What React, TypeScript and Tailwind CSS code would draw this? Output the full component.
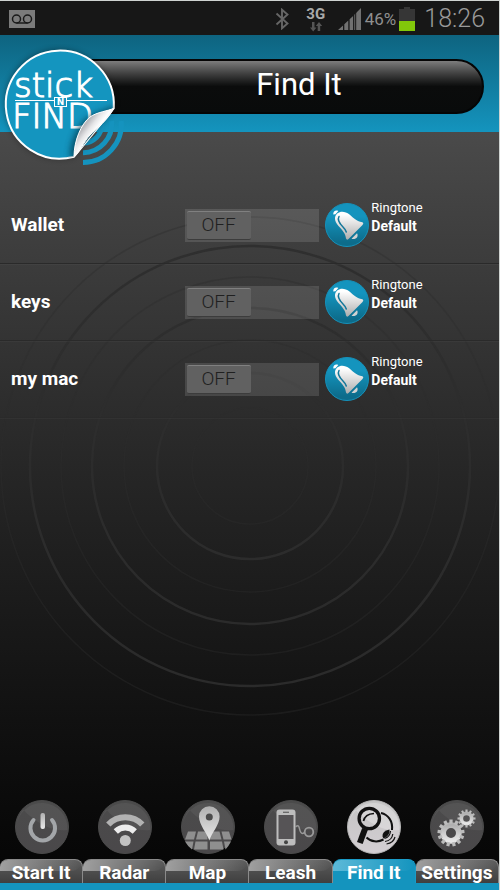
import { useState, type ReactNode } from "react";

function StatusBar() {
  return (
    <div className="flex h-[34px] items-center bg-[#171717] pl-[9px] pr-[14px] pt-[2px] text-[#8f8f8f]">
      <svg width="26" height="18" viewBox="0 0 26 18" role="img" aria-label="Voicemail">
        <rect width="26" height="18" fill="#7b7b7b" />
        <g fill="none" stroke="#1a1a1a" strokeWidth="1.5">
          <circle cx="7.5" cy="9" r="4" />
          <circle cx="18.5" cy="9" r="4" />
          <path d="M7.5 13h11" />
        </g>
      </svg>
      <div className="ml-auto flex items-center">
        <svg width="14" height="22" viewBox="0 0 14 22" fill="none" stroke="#666" strokeWidth="1.9" role="img" aria-label="Bluetooth">
          <path d="M1.500 5.500l11 10-5.500 4.800V1.700l5.500 4.800-11 10" />
        </svg>
        <div className="ml-[17px] flex w-[20px] flex-col items-center text-[15px] font-bold leading-[15px] text-[#a9a9a9]">
          <span>3G</span>
          <svg width="14" height="10" viewBox="0 0 14 10" fill="#555" aria-hidden="true">
            <path d="M3 0h2.500v5.500h2L4.200 9.500 1 5.500h2zM8.700 9h2.500V4h2L10 0 6.800 4h1.900z" />
          </svg>
        </div>
        <svg className="ml-[12px]" width="24" height="24" viewBox="0 0 24 24" fill="#717171" role="img" aria-label="Signal">
          <path d="M0 23l5-4.500V23zM6.300 17.200l4-3.800V23h-4zM11.600 12.200l3.500-3.300V23h-3.500zM16.300 7.700L23 1v22h-6.700z" />
          <path d="M17.700 5v18" stroke="#171717" strokeWidth="1" />
        </svg>
        <span className="ml-[3px] text-[17px] leading-[20px]">46%</span>
        <svg className="ml-[3px]" width="16" height="24" viewBox="0 0 16 24" role="img" aria-label="Battery">
          <path d="M5 0h6v2h5v12H0V2h5z" fill="#363636" />
          <rect y="14" width="16" height="10" fill="#82c80a" />
        </svg>
        <span className="ml-[9px] text-[25px] font-light leading-[30px] text-[#9a9a9a]">18:26</span>
      </div>
    </div>
  );
}

function Logo() {
  return (
    <svg className="absolute left-0 top-[9px]" width="128" height="124" viewBox="0 44 128 124" role="img" aria-label="Stick N Find">
      <defs>
        <linearGradient id="curl" x1="86" y1="124" x2="99" y2="134" gradientUnits="userSpaceOnUse">
          <stop offset="0" stopColor="#b9b9bd" />
          <stop offset="0.35" stopColor="#e6e6e8" />
          <stop offset="0.7" stopColor="#fff" />
          <stop offset="1" stopColor="#dcdcde" />
        </linearGradient>
        <clipPath id="disc">
          <path d="M113.700 108.300A53.500 53.500 0 1 0 74 156.700Z" />
        </clipPath>
        <filter id="soft" x="-30%" y="-30%" width="160%" height="160%">
          <feGaussianBlur stdDeviation="3" />
        </filter>
      </defs>
      <g fill="none" stroke="#1593be" strokeWidth="5">
        <path d="M83 162.500A38.500 38.500 0 0 0 121.300 121" />
        <path d="M83 152.700A28.700 28.700 0 0 0 111.500 121" />
        <path d="M83 143A19 19 0 0 0 102 124" />
      </g>
      <path d="M113.700 108.300A54.500 54.500 0 1 0 74 156.700Z" fill="#000" opacity="0.4" filter="url(#soft)" />
      <path d="M113.700 108.300A54 54 0 1 0 74 156.700Z" fill="#1495bf" stroke="#fff" strokeWidth="2" />
      <g fill="#fff" stroke="#fff" strokeWidth="1.100" className="font-['DejaVu_Sans']">
        <text x="14" y="97" fontSize="34" fontWeight="200">stick</text>
        <text x="12" y="128" fontSize="34" fontWeight="200">FIND</text>
      </g>
      <path d="M15 100.500h92" stroke="#fff" strokeWidth="1" />
      <rect x="54.500" y="97.500" width="12" height="9" fill="#1495bf" stroke="#fff" />
      <text x="60.500" y="105" fontSize="9" fontWeight="700" textAnchor="middle" fill="#fff" className="font-['DejaVu_Sans']">N</text>
      <g clipPath="url(#disc)">
        <path d="M70 158C70 138 80 120 94 114L115 106V158Z" fill="#04384c" opacity="0.75" filter="url(#soft)" />
      </g>
      <path d="M74 156.700C74 141 81 124 90 117C97 112 108 111 113.700 108.300C108 120 97 128 90 135C84 141 80 152 74 156.700Z" fill="url(#curl)" stroke="#fff" strokeWidth="1" />
    </svg>
  );
}

function Header() {
  return (
    <header className="relative z-10 bg-linear-to-b from-[#0e6480] to-[#1494be] pb-[18px] pl-[60px] pr-[15px] pt-[24px]">
      <div className="flex h-[55px] items-center justify-center rounded-r-full border-2 border-[#050505] bg-linear-to-b from-[#7d7d7d] via-[#0b0c0c] via-50% to-[#090b0b] pb-[3px] pl-[54px]">
        <h1 className="text-[31px] leading-[36px] text-white">Find It</h1>
      </div>
      <Logo />
    </header>
  );
}

function Rings() {
  const rings = [
    { r: 58, soft: true },
    { r: 93, soft: false },
    { r: 126, soft: true },
    { r: 158, soft: false },
    { r: 189, soft: true },
    { r: 220, soft: false },
    { r: 249, soft: true },
  ];
  return (
    <div className="pointer-events-none absolute inset-0 flex justify-center overflow-hidden" aria-hidden="true">
      <svg className="shrink-0" width="500" height="600" viewBox="0 0 500 600" fill="none" stroke="#2e2e2e">
        {rings.map((ring) => (
          <circle key={ring.r} cx="250" cy="334" r={ring.r} strokeWidth={ring.soft ? 1.5 : 2.5} opacity={ring.soft ? 0.4 : 0.9} />
        ))}
      </svg>
    </div>
  );
}

function BellIcon() {
  return (
    <svg width="44" height="44" viewBox="0 0 44 44" aria-hidden="true">
      <defs>
        <linearGradient id="bellDisc" x1="0" y1="0" x2="0" y2="1">
          <stop offset="0.3" stopColor="#1494be" />
          <stop offset="0.9" stopColor="#0d6c8b" />
        </linearGradient>
        <linearGradient id="bellBody" x1="0" y1="0" x2="0" y2="1">
          <stop offset="0.1" stopColor="#fff" />
          <stop offset="1" stopColor="#adadad" />
        </linearGradient>
      </defs>
      <circle cx="22" cy="22" r="21.500" fill="url(#bellDisc)" stroke="#1591ba" />
      <path d="M8.300 11.500C8 8.500 10.500 6.800 13.300 8L10.500 11.300Z" fill="#fff" />
      <path d="M12.500 10.300C15.500 7.800 20.500 8.300 24.500 11.500C28.500 14.700 30.500 18 37.500 19.200Q39.200 20.500 37.500 22L23.500 36Q21.800 37.500 21 35.500C20.300 30 17.500 27.500 13.500 23C9 18 9 13.200 12.500 10.300Z" fill="url(#bellBody)" />
      <path d="M14 13.500C12 17 14.500 20.500 18 24Q20.500 26.500 21.300 29" fill="none" stroke="#13779a" strokeWidth="1.500" strokeLinecap="round" />
      <path d="M26.500 35.800L32 30.200C34 33.500 31 37 26.500 35.800Z" fill="#d2d2d2" />
    </svg>
  );
}

function DeviceRow({ name }: { name: string }) {
  const [on, setOn] = useState(false);
  const id = "find-" + name.replace(/\s/g, "-").toLowerCase();
  return (
    <li className="grid h-[77px] grid-cols-[37%_27%_1fr] items-center border-b border-[#2a2a2a] shadow-[0_1px_0_rgba(255,255,255,0.03)]">
      <label htmlFor={id} className="pl-[11px] text-[19px] font-bold leading-[24px] text-white">
        {name}
      </label>
      <label className={"flex h-[33px] bg-white/12 p-[2px] " + (on ? "justify-end" : "justify-start")}>
        <input id={id} type="checkbox" className="sr-only" checked={on} onChange={() => setOn(!on)} />
        <span className="flex w-[64px] items-center justify-center rounded-[2px] border-b border-t border-b-[#3c3c3c] border-t-[#808080] bg-[#616161] text-[19px] font-light leading-[24px] text-[#202020]">
          {on ? "ON" : "OFF"}
        </span>
      </label>
      <button type="button" className="flex items-center gap-[2px] pl-[6px] text-left text-white">
        <BellIcon />
        <span className="flex flex-col pb-[16px] leading-[18px]">
          <span className="text-[13px]">Ringtone</span>
          <span className="text-[14px] font-bold">Default</span>
        </span>
      </button>
    </li>
  );
}

function Disc({ active = false, children }: { active?: boolean; children: ReactNode }) {
  return (
    <svg width="54" height="54" viewBox="0 0 54 54" aria-hidden="true">
      <circle cx="27" cy="27" r="26.500" fill={active ? "url(#discOn)" : "url(#discOff)"} stroke={active ? "#b5b5b5" : "#4b4b4b"} />
      <path d="M1.500 27A25.500 25.500 0 0 1 52.500 30C38 32 22 24 8 9.500Q2 17 1.500 27Z" fill="#fff" opacity={active ? 0.25 : 0.05} />
      {children}
    </svg>
  );
}

function Gear({ cx, cy, r, teeth }: { cx: number; cy: number; r: number; teeth: number }) {
  const angles = Array.from({ length: teeth }, (_, i) => (i * 360) / teeth);
  return (
    <g>
      <circle cx={cx} cy={cy} r={r * 0.58} fill="none" stroke="url(#metal)" strokeWidth={r * 0.42} />
      {angles.map((a) => (
        <rect key={a} x={cx - r * 0.12} y={cy - r} width={r * 0.24} height={r * 0.3} fill="#bcbcbc" transform={`rotate(${a} ${cx} ${cy})`} />
      ))}
    </g>
  );
}

const tabs = [
  {
    label: "Start It",
    icon: (
      <Disc>
        <path d="M18.500 20A12.300 12.300 0 1 0 37 20" fill="none" stroke="#a3a6a9" strokeWidth="4" strokeLinecap="round" />
        <rect x="25.500" y="13" width="4.500" height="16" rx="2" fill="url(#metal)" />
      </Disc>
    ),
  },
  {
    label: "Radar",
    icon: (
      <Disc>
        <circle cx="27.300" cy="40.500" r="5.500" fill="#c2c2c2" />
        <path d="M17.800 31.500A13.500 13.500 0 0 1 36.800 31.500" fill="none" stroke="#ececec" strokeWidth="6" />
        <path d="M10.300 24.500A23.500 23.500 0 0 1 44.300 24.500" fill="none" stroke="#b2b2b2" strokeWidth="6" />
      </Disc>
    ),
  },
  {
    label: "Map",
    icon: (
      <Disc>
        <g fill="#8f8f8f">
          <path d="M7 31.500h8L13 39.500H4zM17 31.500h9.500v8H15zM29 31.500h9.500l2 8H29zM40.500 31.500h7.500l2.500 8h-8z" />
          <path d="M4 41.500h8.500L11 49.500Q6.500 46 4 41.500zM14.500 41.500h12v8H13zM29 41.500h12l1.500 8H29zM43 41.500h7Q47.500 46.500 44.500 49.500z" />
        </g>
        <path d="M28.300 40.500C26 33 18 25 18 16.500A10.300 10.300 0 0 1 38.600 16.500C38.600 25 30.600 33 28.300 40.500Z" fill="url(#metal)" />
        <circle cx="28.300" cy="17" r="3.500" fill="#4c4c4c" />
      </Disc>
    ),
  },
  {
    label: "Leash",
    icon: (
      <Disc>
        <rect x="12.500" y="9.500" width="19" height="36" rx="3" fill="#bdbdbd" />
        <rect x="14.500" y="15" width="15" height="24" fill="#565456" />
        <path d="M19 12.300h6" stroke="#666" strokeWidth="1.300" />
        <circle cx="22" cy="42.300" r="2" fill="#444" />
        <path d="M31.500 27C37 22 34 33 38.500 33.500Q40 33.500 40.500 32" fill="none" stroke="#9a9a9a" strokeWidth="1.500" />
        <circle cx="45" cy="32" r="4.300" fill="none" stroke="#9a9a9a" strokeWidth="1.800" />
      </Disc>
    ),
  },
  {
    label: "Find It",
    active: true,
    icon: (
      <Disc active>
        <g fill="none" stroke="#111">
          <circle cx="22.300" cy="18.500" r="10.200" strokeWidth="3.300" />
          <path d="M16.500 21Q18 14 27 13.500" strokeWidth="1.700" />
          <path d="M18 29L12.800 43" strokeWidth="6" />
          <path d="M34 13C41 14.500 46 21 45 30" strokeWidth="2" />
          <path d="M19.500 37.500C24 42 31 42.500 36.500 39.500" strokeWidth="2" />
          <path d="M37.500 38.500Q43 37 43.500 31M38 41.500Q45 40.500 45.800 34M39.500 44Q46.500 43 48 37" strokeWidth="1.200" />
        </g>
        <path d="M35.500 36.500Q35 31 42.500 29.500Q43 36 36.500 38.500Z" fill="#111" />
      </Disc>
    ),
  },
  {
    label: "Settings",
    icon: (
      <Disc>
        <Gear cx={21} cy={33} r={13.500} teeth={13} />
        <Gear cx={36.500} cy={18.500} r={9} teeth={12} />
      </Disc>
    ),
  },
];

function TabBar() {
  return (
    <nav className="relative border-b-[7px] border-[#1494be]">
      <svg className="absolute h-0 w-0" aria-hidden="true">
        <defs>
          <linearGradient id="discOff" x1="0" y1="0" x2="0" y2="1">
            <stop offset="0" stopColor="#4b4b4b" />
            <stop offset="1" stopColor="#4a484a" />
          </linearGradient>
          <linearGradient id="discOn" x1="0" y1="0" x2="0" y2="1">
            <stop offset="0" stopColor="#c4c4c4" />
            <stop offset="1" stopColor="#d3ced2" />
          </linearGradient>
          <linearGradient id="metal" x1="0" y1="0" x2="0" y2="1">
            <stop offset="0" stopColor="#b0b0b0" />
            <stop offset="1" stopColor="#e8e8e8" />
          </linearGradient>
        </defs>
      </svg>
      <ul className="grid grid-cols-6">
        {tabs.map((tab) => (
          <li key={tab.label}>
            <a href="#" aria-current={tab.active ? "page" : undefined} className="flex flex-col items-center gap-[5px]">
              {tab.icon}
              <span
                className={
                  "relative h-[24px] w-full overflow-hidden whitespace-nowrap rounded-t-[8px] border-r border-t text-center text-[19px] font-bold leading-[25px] text-white " +
                  (tab.active ? "border-[#1a9cc8] bg-[#1494be]" : "border-[#8a8a8a] bg-linear-to-b from-[#5c5c5c] to-[#3f3f3f]")
                }
              >
                <span
                  className={
                    "absolute left-0 top-0 h-[11px] w-full rounded-br-[60px] bg-linear-to-r to-transparent " +
                    (tab.active ? "from-[#5cb9d8]" : "from-[#a0a0a0]")
                  }
                />
                <span className="relative">{tab.label}</span>
              </span>
            </a>
          </li>
        ))}
      </ul>
    </nav>
  );
}

export default function App() {
  return (
    <div className="flex min-h-screen flex-col border-r border-t border-[#cfd3d1] bg-[#0a0a0a] font-[Roboto,'Liberation_Sans',sans-serif]">
      <StatusBar />
      <Header />
      <div className="relative flex flex-1 flex-col bg-linear-to-b from-[#4a4a4a] via-[#262626] via-45% to-[#050505]">
        <Rings />
        <main className="relative flex-1 pt-[55px]">
          <ul>
            <DeviceRow name="Wallet" />
            <DeviceRow name="keys" />
            <DeviceRow name="my mac" />
          </ul>
        </main>
        <TabBar />
      </div>
    </div>
  );
}
